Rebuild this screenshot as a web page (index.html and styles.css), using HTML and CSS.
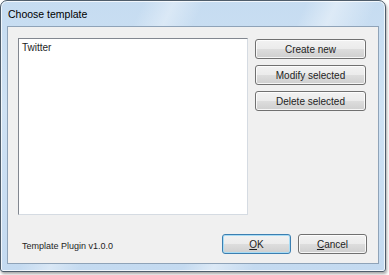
FILE: index.html
```html
<!DOCTYPE html>
<html>
  <head>
    <meta charset="UTF-8">
    <link rel="stylesheet" href="styles.css">
  </head>
  <body>
    <div class="window">
      <div class="titlebar">Choose template</div>
      <div class="client">
        <div class="main">
          <div class="listbox">
            <div class="item">Twitter</div>
          </div>
          <div class="actions">
            <button class="btn">Create new</button>
            <button class="btn">Modify selected</button>
            <button class="btn">Delete selected</button>
          </div>
        </div>
        <div class="footer">
          <span class="version">Template Plugin v1.0.0</span>
          <span class="footer-pad"></span>
          <button class="btn btn-small btn-default"><u>O</u>K</button>
          <button class="btn btn-small"><u>C</u>ancel</button>
        </div>
      </div>
    </div>
  </body>
</html>
```

FILE: styles.css
```css
body {
  margin: 0;
  width: 389px;
  height: 275px;
  overflow: hidden;
  background: #ffffff;
  font-family: "Liberation Sans", Arial, sans-serif;
  font-size: 10px;
  color: #1e1e1e;
}
.window {
  box-sizing: border-box;
  width: 386px;
  height: 272px;
  display: flex;
  flex-direction: column;
  border: 1px solid #4f5d6b;
  border-radius: 7px 7px 3px 3px;
  background:
    linear-gradient(115deg, transparent 0%, transparent 28%, rgba(255, 255, 255, 0.35) 34%, transparent 40%, transparent 60%, rgba(255, 255, 255, 0.4) 66%, transparent 74%),
    linear-gradient(to bottom, #c6dcf1 0%, #cfe2f4 40%, #c4daf0 100%);
  box-shadow: inset 0 0 0 1px rgba(255, 255, 255, 0.75), 1px 2px 3px rgba(0, 0, 0, 0.35);
}
.titlebar {
  height: 25px;
  line-height: 27px;
  padding-left: 7px;
  font-size: 10.5px;
  color: #000000;
}
.client {
  flex: 1;
  margin: 0 6px 7px 6px;
  padding: 11px 11px 9px 10px;
  display: flex;
  flex-direction: column;
  background: #f0f0f0;
  border: 1px solid #8fa3b8;
}
.main {
  display: flex;
  gap: 7px;
  height: 177px;
}
.listbox {
  box-sizing: border-box;
  width: 230px;
  height: 177px;
  background: #ffffff;
  border: 1px solid #828790;
  border-right-color: #d5dbe2;
  border-bottom-color: #d5dbe2;
  padding: 2px 3px;
}
.item {
  line-height: 13px;
  color: #1e1e1e;
}
.actions {
  display: flex;
  flex-direction: column;
  gap: 6px;
  padding-top: 1px;
}
.btn {
  box-sizing: border-box;
  width: 111px;
  height: 20px;
  padding: 0;
  font-family: "Liberation Sans", Arial, sans-serif;
  font-size: 10px;
  color: #1e1e1e;
  border: 1px solid #707070;
  border-radius: 3px;
  background: linear-gradient(to bottom, #f2f2f2 0%, #ebebeb 50%, #dddddd 51%, #cfcfcf 100%);
  box-shadow: inset 0 0 0 1px rgba(255, 255, 255, 0.8);
}
.btn u {
  text-decoration-thickness: 1px;
}
.footer {
  display: flex;
  align-items: center;
  gap: 7px;
  margin-top: auto;
  padding-left: 4px;
}
.version {
  padding-top: 3px;
  font-size: 9px;
  color: #1e1e1e;
}
.footer-pad {
  flex: 1;
}
.btn-small {
  width: 69px;
}
.btn-default {
  border-color: #3c7fb1;
  box-shadow: inset 0 0 0 1px #a8dcf5;
}
```
